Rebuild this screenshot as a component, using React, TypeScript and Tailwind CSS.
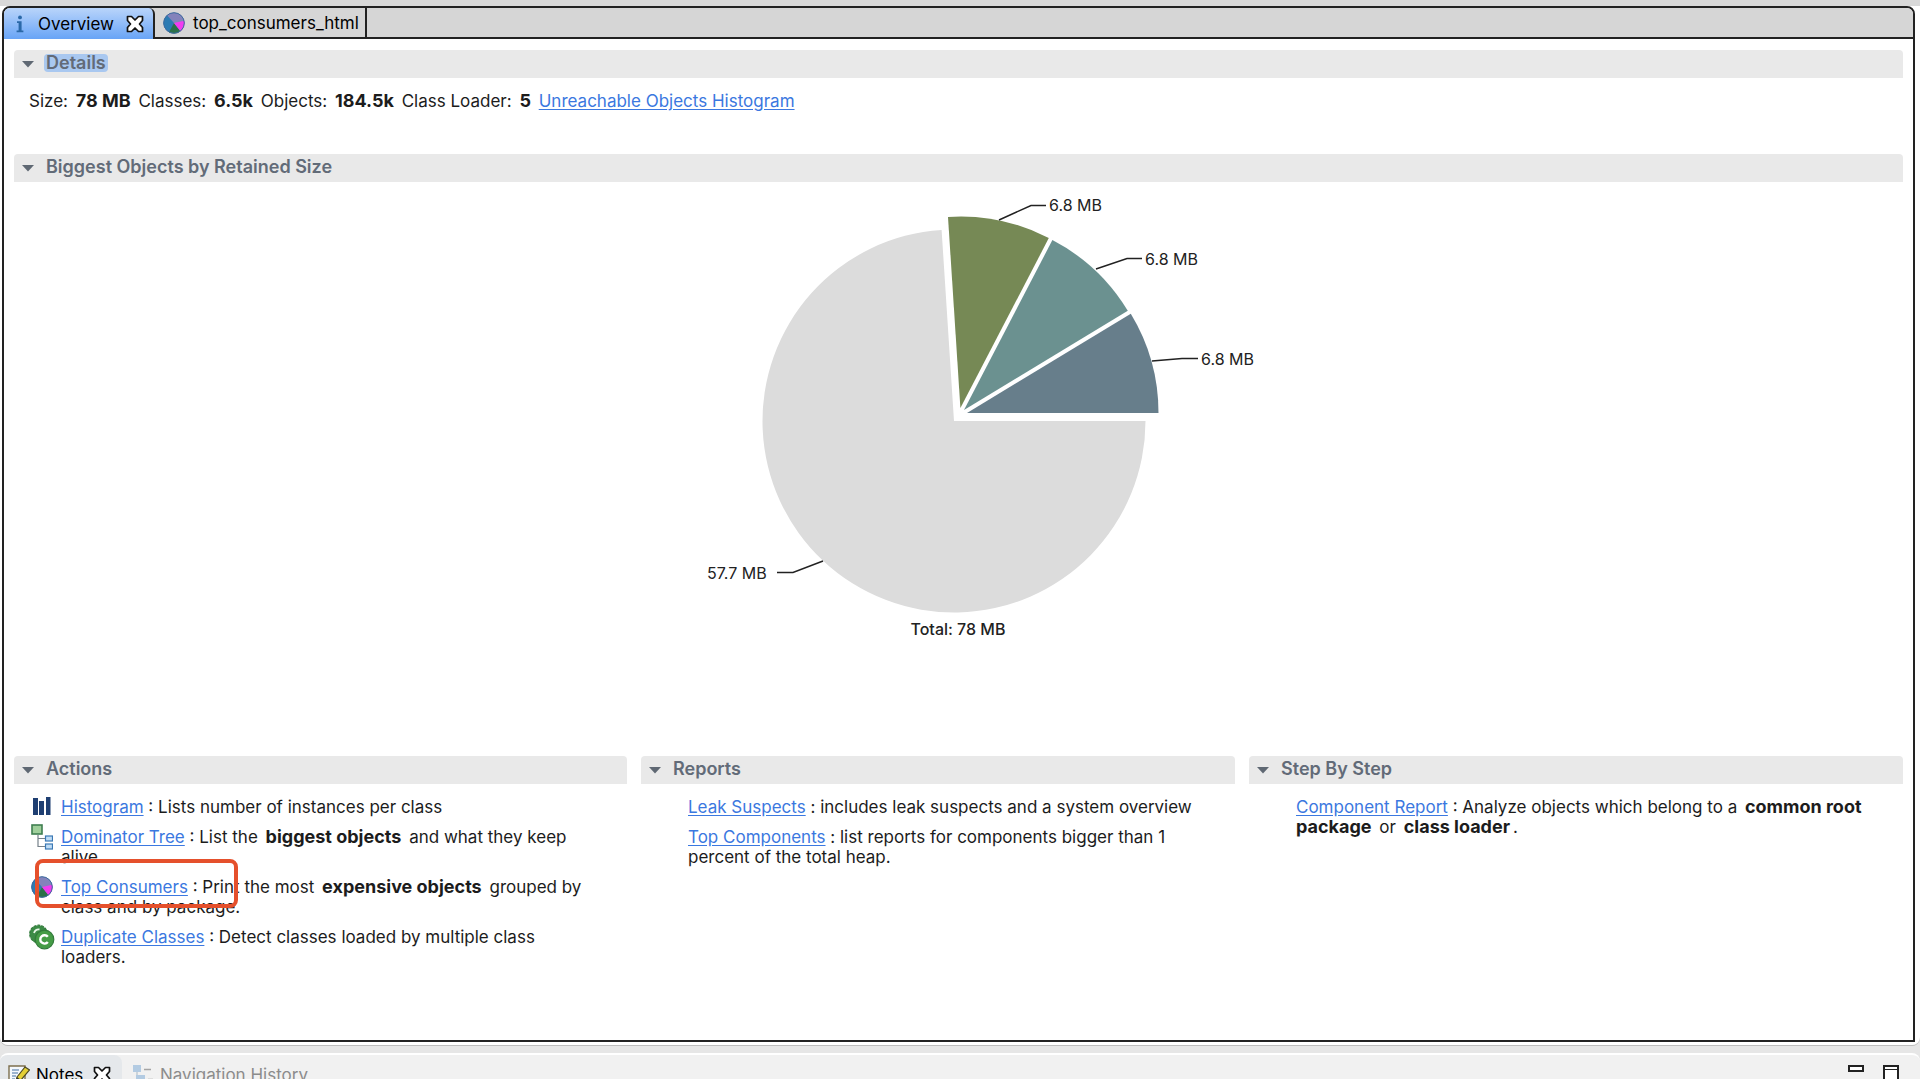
import type { ReactNode } from 'react'

interface Slice {
  path: string
  color: string
}

interface Leader {
  points: string
  label: string
  x: number
  y: number
}

const slices: Slice[] = [
  { path: 'M953 421H1144.5A191.5 191.5 0 1 1 940.6 229.9Z', color: '#dcdcdc' },
  { path: 'M966 413H1157.5A191.5 191.5 0 0 0 1129.8 313.8Z', color: '#677e8b' },
  { path: 'M963 410L1126.8 310.8A191.5 191.5 0 0 0 1051.4 240.1Z', color: '#6b9190' },
  { path: 'M959.4 408L1047.8 238.1A191.5 191.5 0 0 0 947 216.9Z', color: '#768955' }
]

const leaders: Leader[] = [
  { points: '998,220 1030,205.5 1045,205.5', label: '6.8 MB', x: 1048, y: 211 },
  { points: '1095,269 1126,258.5 1141,258.5', label: '6.8 MB', x: 1144, y: 265 },
  { points: '1151,361 1181,358.5 1197,358.5', label: '6.8 MB', x: 1200, y: 365 },
  { points: '822,561 792,572.5 776,572.5', label: '57.7 MB', x: 706, y: 579 }
]

function CloseIcon() {
  return (
    <svg className="h-[18px] w-[18px]" viewBox="0 0 18 18" fill="#fff" stroke="#111" strokeWidth="1.7" strokeLinejoin="round">
      <path d="M1.5 1.5H5.5L9 5L12.500 1.5H16.5V5.5L13.500 9L16.5 12.5V16.5H12.5L9 13L5.5 16.5H1.5V12.5L4.500 9L1.5 5.5Z" />
    </svg>
  )
}

function InfoIcon() {
  return (
    <svg className="h-[18px] w-2" viewBox="0 0 8 18" fill="#2a68a8">
      <circle cx="4" cy="2.4" r="1.9" />
      <path d="M1 6.2H5.6V15.4H7.4V17.2H0.6V15.4H2.6V8H1Z" />
    </svg>
  )
}

function PieIcon() {
  return (
    <svg className="h-[22px] w-[22px] shrink-0" viewBox="0 0 22 22">
      <circle cx="11" cy="11" r="10.5" fill="#8383bb" />
      <path d="M11 11L4 3.2A10.5 10.5 0 0 0 7 20.7Z" fill="#2c7bb3" />
      <path d="M11 11L6 20.2A10.5 10.5 0 0 0 17.5 19.2Z" fill="#2b7048" />
      <path d="M11 11L17.5 19.2A10.5 10.5 0 0 0 21.3 8.8Z" fill="#f23cf0" />
      <circle cx="11" cy="11" r="10.3" fill="none" stroke="#3d6c9e" strokeWidth="1" />
    </svg>
  )
}

function HistogramIcon() {
  return (
    <svg className="h-[22px] w-[22px] shrink-0" viewBox="0 0 22 22" fill="#1f3f72">
      <path d="M2 2H7V19H2ZM8 5H13V19H8ZM15 1H19.5V19H15Z" />
    </svg>
  )
}

function TreeIcon() {
  return (
    <svg className="h-[26px] w-[22px] shrink-0" viewBox="0 0 22 26">
      <path d="M7 11V22.5H15M7 14.5H15" fill="none" stroke="#76818a" strokeWidth="1.2" />
      <rect x="1" y="1" width="10" height="9" fill="#9fcf9b" stroke="#3f7e50" strokeWidth="1.6" />
      <rect x="14.5" y="12" width="7" height="5" fill="#bfdcf5" stroke="#3a78b4" strokeWidth="1.2" />
      <rect x="14.5" y="20" width="7" height="5" fill="#bfdcf5" stroke="#3a78b4" strokeWidth="1.2" />
    </svg>
  )
}

function ClassesIcon() {
  return (
    <svg className="h-[26px] w-[26px] shrink-0" viewBox="0 0 26 26" fill="none">
      <circle cx="9.5" cy="10" r="8.8" fill="#3c8b46" stroke="#327a3b" strokeWidth="1.2" strokeDasharray="3 1" />
      <path d="M5 9Q6.5 5 10.5 5.5" stroke="#e8f6e8" strokeWidth="1.8" />
      <circle cx="15.5" cy="15.5" r="9.3" fill="#459c46" stroke="#327a3b" strokeWidth="1.2" />
      <path d="M18.8 12.8A4.2 4.2 0 1 0 18.8 18" stroke="#fff" strokeWidth="2.4" />
    </svg>
  )
}

function NotesIcon() {
  return (
    <svg className="h-[22px] w-[22px]" viewBox="0 0 22 22">
      <path d="M1 2H17V21H1Z" fill="#f4f8fc" stroke="#7d6f4e" strokeWidth="1.4" />
      <path d="M4 6H11M4 9H10M4 12H8M4 15H7" stroke="#7d9cc0" strokeWidth="1.3" />
      <path d="M9 13L17 3L21.5 6L13 16L8 18Z" fill="#e3cf35" stroke="#4d4a24" strokeWidth="1.2" />
      <path d="M8 18L9 13L13 16Z" fill="#333" />
    </svg>
  )
}

function HistoryIcon() {
  return (
    <svg className="h-[22px] w-[22px]" viewBox="0 0 22 22">
      <path d="M5 7V20H10M5 14H10" fill="none" stroke="#a9b8c4" />
      <path d="M1 1H9V8H1ZM4 11H13V17H4Z" fill="#b3cbe2" />
      <path d="M12 5.5H19M16 15.5H21" stroke="#a4a4a4" strokeWidth="1.6" />
    </svg>
  )
}

function SectionHeader({ title, selected }: { title: string; selected?: boolean }) {
  return (
    <h2 className="rounded-t-sm bg-[#e9e9e9] text-[18px] font-semibold text-[#626b78]">
      <button className="flex h-7 w-full items-center gap-2.5 pl-2 text-left">
        <svg className="h-3 w-3" viewBox="0 0 12 12" fill="#5f6873">
          <path d="M0 3H12L6 9.500Z" />
        </svg>
        <span className={selected ? 'mb-[3px] rounded-sm bg-[#a9c8f0] px-0.5 leading-[18px]' : 'mb-[3px] px-0.5 leading-[18px]'}>
          {title}
        </span>
      </button>
    </h2>
  )
}

function TextLink({ children }: { children: ReactNode }) {
  return (
    <a href="#" className="text-[#3b78e0] underline underline-offset-2">
      {children}
    </a>
  )
}

function Strong({ children }: { children: ReactNode }) {
  return <b className="mx-[3px] text-[18px]">{children}</b>
}

function ActionItem({ icon, children }: { icon: ReactNode; children: ReactNode }) {
  return (
    <li className="flex">
      <span className="flex h-5 w-[47px] shrink-0 items-center justify-center pl-2">{icon}</span>
      <p>{children}</p>
    </li>
  )
}

function PieChart() {
  return (
    <svg className="mx-auto h-[450px] w-[600px]" viewBox="658 194 600 450" role="img" aria-label="Biggest Objects by Retained Size">
      {slices.map((s) => (
        <path key={s.color} d={s.path} fill={s.color} />
      ))}
      {leaders.map((l) => (
        <g key={l.points}>
          <polyline points={l.points} fill="none" stroke="#222" strokeWidth="1.5" />
          <text x={l.x} y={l.y} className="fill-[#222] text-[16px]">
            {l.label}
          </text>
        </g>
      ))}
      <text x="957" y="635" textAnchor="middle" className="fill-[#222] text-[16px] font-medium">
        Total: 78 MB
      </text>
    </svg>
  )
}

export default function App() {
  return (
    <div className="flex h-screen flex-col overflow-hidden bg-[#e6e6e6] font-['Inter',sans-serif] text-[17px] leading-5 text-[#1c1c1c]">
      {/* Editor area */}
      <div className="flex min-h-0 flex-1 flex-col rounded-b-lg border-b border-[#bdbdbd] bg-[#d9d9d9] pt-1.5">
        <div className="flex min-h-0 flex-1 flex-col rounded-b-lg bg-white pb-[3px]">
          <main className="mr-[5px] ml-0.5 flex min-h-0 flex-1 flex-col overflow-hidden rounded-t-lg border-2 border-[#222] bg-white">
            <div role="tablist" className="flex h-[31px] shrink-0 bg-[#d6d6d6]">
              <button
                role="tab"
                aria-selected="true"
                className="flex w-[151px] items-center rounded-tr-md border-r-2 border-[#222] bg-linear-to-b from-[#b9d4fa] to-[#68a4f6] pl-3 text-black"
              >
                <InfoIcon />
                <span className="mr-3 ml-3.5">Overview</span>
                <CloseIcon />
              </button>
              <button role="tab" className="flex items-center gap-2 border-r-2 border-b-2 border-[#222] pr-1.5 pl-2 text-black">
                <PieIcon />
                top_consumers_html
              </button>
              <div className="flex-1 border-b-2 border-[#222]" />
            </div>

            <div className="flex flex-1 flex-col px-2.5 pt-[11px]">
              <section>
                <SectionHeader title="Details" selected />
                <p className="px-[15px] pt-[13px]">
                  Size: <Strong>78 MB</Strong> Classes: <Strong>6.5k</Strong> Objects: <Strong>184.5k</Strong> Class Loader:{' '}
                  <Strong>5</Strong> <TextLink>Unreachable Objects Histogram</TextLink>
                </p>
              </section>

              <section className="mt-[43px]">
                <SectionHeader title="Biggest Objects by Retained Size" />
                <div className="pt-3">
                  <PieChart />
                </div>
              </section>

              <div className="mt-28 grid grid-cols-[613fr_594fr_654fr] gap-3.5">
                <section className="relative">
                  <SectionHeader title="Actions" />
                  <ul className="flex flex-col gap-2.5 pt-[13px] pr-9">
                    <ActionItem icon={<HistogramIcon />}>
                      <TextLink>Histogram</TextLink> : Lists number of instances per class
                    </ActionItem>
                    <ActionItem icon={<TreeIcon />}>
                      <TextLink>Dominator Tree</TextLink> : List the <Strong>biggest objects</Strong> and what they keep alive.
                    </ActionItem>
                    <ActionItem icon={<PieIcon />}>
                      <TextLink>Top Consumers</TextLink> : Print the most <Strong>expensive objects</Strong> grouped by class and by
                      package.
                    </ActionItem>
                    <ActionItem icon={<ClassesIcon />}>
                      <TextLink>Duplicate Classes</TextLink> : Detect classes loaded by multiple class loaders.
                    </ActionItem>
                  </ul>
                  {/* Highlight around Top Consumers */}
                  <div className="pointer-events-none absolute top-[103px] left-[21px] h-[49px] w-[203px] rounded-lg border-4 border-[#e5502c]" />
                </section>

                <section>
                  <SectionHeader title="Reports" />
                  <ul className="flex flex-col gap-2.5 pt-[13px] pr-9 pl-[47px]">
                    <li>
                      <TextLink>Leak Suspects</TextLink> : includes leak suspects and a system overview
                    </li>
                    <li>
                      <TextLink>Top Components</TextLink> : list reports for components bigger than 1 percent of the total heap.
                    </li>
                  </ul>
                </section>

                <section>
                  <SectionHeader title="Step By Step" />
                  <p className="pt-[13px] pr-9 pl-[47px]">
                    <TextLink>Component Report</TextLink> : Analyze objects which belong to a <Strong>common root package</Strong> or{' '}
                    <Strong>class loader</Strong>.
                  </p>
                </section>
              </div>
            </div>
          </main>
        </div>
      </div>

      {/* Bottom views */}
      <div className="mt-[7px] flex h-[26px] shrink-0 items-start overflow-hidden rounded-t-lg border-t-2 border-white bg-[#f1f1f1]">
        <div role="tablist" className="flex flex-1 items-start">
          <button role="tab" aria-selected="true" className="flex h-10 w-[122px] items-center rounded-tr-lg bg-[#e5e8eb] pl-2 text-black">
            <NotesIcon />
            <span className="mr-2.5 ml-1.5">Notes</span>
            <CloseIcon />
          </button>
          <button role="tab" className="flex h-10 items-center gap-1.5 pl-2.5 text-[#8c8c8c]">
            <HistoryIcon />
            Navigation History
          </button>
        </div>
        <button aria-label="Minimize" className="mt-2.5 mr-[19px] h-[7px] w-4 border-2 border-[#222] bg-white" />
        <button aria-label="Maximize" className="mt-2.5 mr-[21px] flex h-5 w-4 items-start border-2 border-[#222] bg-white">
          <span className="mt-0.5 h-px w-full bg-[#222]" />
        </button>
      </div>
    </div>
  )
}
